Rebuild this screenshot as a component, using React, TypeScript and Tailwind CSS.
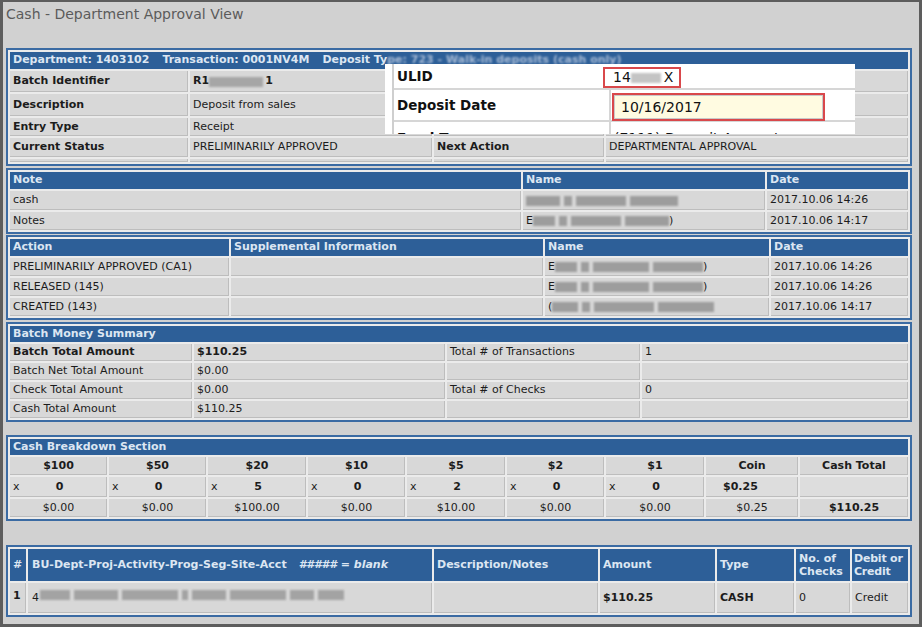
import React from 'react';

const cell =
  'flex items-center overflow-hidden whitespace-nowrap bg-[#d8d8d8] px-[3px] shadow-[inset_-1px_-1px_0_#bdbdbd]';
const headBase = 'flex items-center overflow-hidden bg-[#2d5f98] font-bold text-[#dce6f2]';
const head = `${headBase} whitespace-nowrap px-[3px]`;
const panel = 'ml-[3px] grid w-[906px] gap-[2px] border-2 border-[#3b6ba3] bg-[#ebebeb] p-[2px]';

// grey mosaic blocks standing in for the redacted names / ids
function Redacted({ parts, tone = 'bg-[#9d9d9d]' }: { parts: string[]; tone?: string }) {
  return (
    <span className="inline-flex items-center gap-[4px]">
      {parts.map((w, i) => (
        <span key={i} className={`inline-block h-[10px] blur-[1.2px] ${tone} ${w}`} />
      ))}
    </span>
  );
}

function Callout() {
  return (
    <div className="absolute left-[382px] top-[62px] h-[70px] w-[470px] overflow-hidden bg-white pl-[7px] text-[#111]">
      <div className="grid h-[78px] grid-cols-[215px_1fr] grid-rows-[26px_32px_20px] border-l-2 border-[#cfcfcf]">
        <div className="flex items-center border-b-2 border-[#d6d6d6] pl-[3px] text-[13.5px] font-bold">ULID</div>
        <div className="flex items-end border-b-2 border-[#d6d6d6]">
          <div className="ml-[-6px] flex h-[21px] w-[78px] items-center border-2 border-[#d9484b] pl-[8px] text-[14px]">
            14
            <Redacted parts={['w-[30px]']} tone="bg-[#c4c4c4]" />
            <span className="ml-[3px]">X</span>
          </div>
        </div>
        <div className="flex items-center border-b-2 border-[#d6d6d6] pl-[3px] text-[13.5px] font-bold">
          Deposit Date
        </div>
        <div className="flex items-start border-b-2 border-l-2 border-[#d6d6d6] pt-[3px]">
          <div className="ml-[1px] flex h-[28px] w-[213px] border-2 border-[#d9484b]">
            <div className="flex flex-1 items-center border border-[#c9c9c9] bg-[#fffbe1] pl-[6px] text-[14px]">
              10/16/2017
            </div>
          </div>
        </div>
        <div className="overflow-hidden pl-[3px] pt-[6px] text-[13.5px] font-bold">Fund Type</div>
        <div className="overflow-hidden border-l-2 border-[#d6d6d6] pl-[3px] pt-[6px] text-[14px]">
          (7111) Deposit Account
        </div>
      </div>
    </div>
  );
}

export default function App() {
  return (
    <div className="relative h-[627px] w-[922px] overflow-hidden border-[3px] border-t-2 border-[#5d5d5d] bg-[#d1d1d1] font-['DejaVu_Sans',Verdana,sans-serif] text-[11px] text-[#1c1c1c]">
      <div className="pl-[3px] pt-[4px] text-[14px] leading-[16px] text-[#5b5b5b]">Cash - Department Approval View</div>

      {/* batch header */}
      <div className={`${panel} mt-[26px] grid-cols-[178px_242px_170px_1fr] grid-rows-[17px_21px_22px_18px_19px_3px]`}>
        <div className={`${head} col-span-4`}>
          <span>Department: 1403102</span>
          <span className="ml-[13px]">Transaction: 0001NV4M</span>
          <span className="ml-[13px]">Deposit Ty</span>
          <span className="blur-[1.2px] text-[#a9bcd6]">pe: 723 - Walk-in deposits (cash only)</span>
        </div>
        <div className={`${cell} font-bold`}>Batch Identifier</div>
        <div className={`${cell} font-bold`}>
          R1
          <Redacted parts={['w-[54px]']} tone="bg-[#a6a6a6]" />
          <span className="ml-[2px]">1</span>
        </div>
        <div className={cell} />
        <div className={cell} />
        <div className={`${cell} font-bold`}>Description</div>
        <div className={cell}>Deposit from sales</div>
        <div className={cell} />
        <div className={cell} />
        <div className={`${cell} font-bold`}>Entry Type</div>
        <div className={cell}>Receipt</div>
        <div className={cell} />
        <div className={cell} />
        <div className={`${cell} font-bold`}>Current Status</div>
        <div className={cell}>PRELIMINARILY APPROVED</div>
        <div className={`${cell} font-bold`}>Next Action</div>
        <div className={cell}>DEPARTMENTAL APPROVAL</div>
        <div className={cell} />
        <div className={cell} />
        <div className={cell} />
        <div className={cell} />
      </div>

      {/* notes */}
      <div className={`${panel} mt-[2px] grid-cols-[511px_242px_1fr] grid-rows-[17px_19px_18px]`}>
        <div className={head}>Note</div>
        <div className={head}>Name</div>
        <div className={head}>Date</div>
        <div className={cell}>cash</div>
        <div className={cell}>
          <Redacted parts={['w-[34px]', 'w-[8px]', 'w-[50px]', 'w-[48px]']} />
        </div>
        <div className={cell}>2017.10.06 14:26</div>
        <div className={cell}>Notes</div>
        <div className={cell}>
          E<Redacted parts={['w-[22px]', 'w-[8px]', 'w-[50px]', 'w-[44px]']} />)
        </div>
        <div className={cell}>2017.10.06 14:17</div>
      </div>

      {/* actions */}
      <div className={`${panel} mt-[1px] grid-cols-[219px_312px_224px_1fr] grid-rows-[17px_18px_18px_18px]`}>
        <div className={head}>Action</div>
        <div className={head}>Supplemental Information</div>
        <div className={head}>Name</div>
        <div className={head}>Date</div>
        <div className={cell}>PRELIMINARILY APPROVED (CA1)</div>
        <div className={cell} />
        <div className={cell}>
          E<Redacted parts={['w-[22px]', 'w-[8px]', 'w-[56px]', 'w-[50px]']} />)
        </div>
        <div className={cell}>2017.10.06 14:26</div>
        <div className={cell}>RELEASED (145)</div>
        <div className={cell} />
        <div className={cell}>
          E<Redacted parts={['w-[22px]', 'w-[8px]', 'w-[56px]', 'w-[50px]']} />)
        </div>
        <div className={cell}>2017.10.06 14:26</div>
        <div className={cell}>CREATED (143)</div>
        <div className={cell} />
        <div className={cell}>
          (<Redacted parts={['w-[26px]', 'w-[8px]', 'w-[60px]', 'w-[56px]']} />
        </div>
        <div className={cell}>2017.10.06 14:17</div>
      </div>

      {/* money summary */}
      <div className={`${panel} mt-[2px] grid-cols-[182px_251px_193px_1fr] grid-rows-[16px_17px_17px_17px_17px]`}>
        <div className={`${head} col-span-4`}>Batch Money Summary</div>
        <div className={`${cell} font-bold`}>Batch Total Amount</div>
        <div className={`${cell} font-bold`}>$110.25</div>
        <div className={cell}>Total # of Transactions</div>
        <div className={cell}>1</div>
        <div className={cell}>Batch Net Total Amount</div>
        <div className={cell}>$0.00</div>
        <div className={cell} />
        <div className={cell} />
        <div className={cell}>Check Total Amount</div>
        <div className={cell}>$0.00</div>
        <div className={cell}>Total # of Checks</div>
        <div className={cell}>0</div>
        <div className={cell}>Cash Total Amount</div>
        <div className={cell}>$110.25</div>
        <div className={cell} />
        <div className={cell} />
      </div>

      {/* cash breakdown */}
      <div
        className={`${panel} mt-[13px] grid-cols-[97px_97px_98px_97px_98px_97px_98px_92px_1fr] grid-rows-[16px_18px_20px_18px]`}
      >
        <div className={`${head} col-span-9`}>Cash Breakdown Section</div>
        {['$100', '$50', '$20', '$10', '$5', '$2', '$1', 'Coin', 'Cash Total'].map((d) => (
          <div key={d} className={`${cell} justify-center bg-[#cfcfcf] font-bold`}>
            {d}
          </div>
        ))}
        {['0', '0', '5', '0', '2', '0', '0'].map((n, i) => (
          <div key={i} className={`${cell} bg-[#dddddd]`}>
            <span className="w-[10px]">x</span>
            <span className="flex-1 pr-[8px] text-center font-bold">{n}</span>
          </div>
        ))}
        <div className={`${cell} bg-[#dddddd] pl-[17px] font-bold`}>$0.25</div>
        <div className={`${cell} bg-[#dddddd]`} />
        {['$0.00', '$0.00', '$100.00', '$0.00', '$10.00', '$0.00', '$0.00', '$0.25'].map((a, i) => (
          <div key={i} className={`${cell} justify-center bg-[#c9c9c9]`}>
            {a}
          </div>
        ))}
        <div className={`${cell} justify-center bg-[#c9c9c9] font-bold`}>$110.25</div>
      </div>

      {/* accounting lines */}
      <div className={`${panel} mt-[24px] grid-cols-[16px_404px_164px_115px_77px_54px_1fr] grid-rows-[32px_30px]`}>
        <div className={head}>#</div>
        <div className={`${head} pl-[4px]`}>
          BU-Dept-Proj-Activity-Prog-Seg-Site-Acct
          <span className="ml-[12px] italic">##### = blank</span>
        </div>
        <div className={head}>Description/Notes</div>
        <div className={head}>Amount</div>
        <div className={head}>Type</div>
        <div className={`${headBase} pl-[3px] leading-[13px]`}>No. of Checks</div>
        <div className={`${headBase} pl-[2px] leading-[13px] tracking-[-0.2px]`}>Debit or Credit</div>
        <div className={`${cell} items-start pt-[5px] font-bold`}>1</div>
        <div className={`${cell} items-start pl-[4px] pt-[7px]`}>
          <span className="mr-[1px]">4</span>
          <Redacted
            parts={['w-[30px]', 'w-[44px]', 'w-[56px]', 'w-[6px]', 'w-[34px]', 'w-[56px]', 'w-[24px]', 'w-[26px]']}
            tone="bg-[#a3a3a3]"
          />
        </div>
        <div className={cell} />
        <div className={`${cell} font-bold`}>$110.25</div>
        <div className={`${cell} font-bold`}>CASH</div>
        <div className={cell}>0</div>
        <div className={cell}>Credit</div>
      </div>

      <Callout />
    </div>
  );
}
